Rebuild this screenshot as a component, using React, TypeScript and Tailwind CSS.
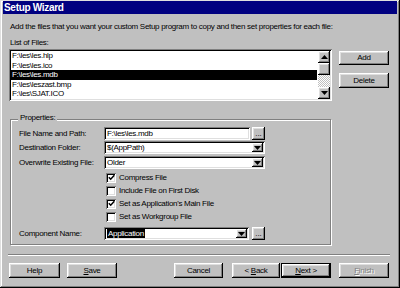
import React from "react";

const sunken =
  "bg-white shadow-[inset_1px_1px_0_#808080,inset_-1px_-1px_0_#ffffff,inset_2px_2px_0_#000000,inset_-2px_-2px_0_#dfdfdf]";
const raised =
  "bg-[#c0c0c0] shadow-[inset_-1px_-1px_0_#000000,inset_1px_1px_0_#ffffff,inset_-2px_-2px_0_#808080,inset_2px_2px_0_#dfdfdf]";

function Down() {
  return (
    <svg width="7" height="4" viewBox="0 0 7 4">
      <polygon points="0,0 7,0 3.5,4" fill="#000" />
    </svg>
  );
}
function Up() {
  return (
    <svg width="7" height="4" viewBox="0 0 7 4">
      <polygon points="0,4 7,4 3.5,0" fill="#000" />
    </svg>
  );
}

function Check({ on, label }: { on: boolean; label: string }) {
  return (
    <div className="flex items-center h-[13px] ml-[87px]">
      <div className={`w-[10px] h-[10px] flex items-center justify-center ${sunken}`}>
        {on && (
          <svg width="7" height="7" viewBox="0 0 7 7">
            <path d="M0.8 3.2 L2.7 5.2 L6.3 1.2" stroke="#000" strokeWidth="1.5" fill="none" />
          </svg>
        )}
      </div>
      <span className="ml-[3px] leading-[11px]">{label}</span>
    </div>
  );
}

function Combo({ w, children }: { w: string; children: React.ReactNode }) {
  return (
    <div className={`${w} h-[13px] flex p-[2px] ${sunken}`}>
      <div className="flex-1 flex items-center pl-[1px] leading-[9px] overflow-hidden whitespace-nowrap">{children}</div>
      <div className={`w-[11px] h-full flex items-center justify-center ${raised}`}>
        <Down />
      </div>
    </div>
  );
}

function Dots({ ml }: { ml: string }) {
  return (
    <div className={`${ml} w-[13px] h-[13px] flex items-end justify-center pb-[3px] ${raised}`}>
      <span className="leading-[6px] tracking-[0px]">...</span>
    </div>
  );
}

const items = [
  "F:\\les\\les.hlp",
  "F:\\les\\les.ico",
  "F:\\les\\les.mdb",
  "F:\\les\\leszast.bmp",
  "F:\\les\\SJAT.ICO",
];

export default function App() {
  return (
    <div className="w-[400px] h-[288px] bg-[#c0c0c0] font-['Liberation_Sans',Arial,sans-serif] text-[8px] tracking-[-0.3px] text-black flex flex-col pt-[1px] px-[3px] overflow-hidden shadow-[inset_-1px_-1px_0_#000000,inset_1px_1px_0_#dfdfdf,inset_-2px_-2px_0_#808080,inset_2px_2px_0_#ffffff]">
      <div className="h-[13px] shrink-0 bg-[#000080] text-white font-bold text-[10px] leading-[13px] pl-[1px]">
        Setup Wizard
      </div>
      <div className="pl-[6px] flex flex-col">
        <div className="mt-[7px] h-[11px] leading-[11px] pl-[1px] whitespace-nowrap">
          Add the files that you want your custom Setup program to copy and then set properties for each file:
        </div>
        <div className="mt-[5px] h-[11px] leading-[11px] pl-[1px]">List of Files:</div>
        <div className="mt-[1px] flex">
          <div className={`w-[323px] h-[52px] p-[2px] flex ${sunken}`}>
            <div className="flex-1 flex flex-col overflow-hidden">
              {items.map((t, i) => (
                <div
                  key={t}
                  className={`h-[9.5px] leading-[9.5px] pl-[1px] mr-[1px] whitespace-nowrap ${
                    i === 2 ? "bg-black text-white" : ""
                  }`}
                >
                  {t}
                </div>
              ))}
            </div>
            <div className="w-[12px] flex flex-col">
              <div className={`h-[12px] flex items-center justify-center ${raised}`}>
                <Up />
              </div>
              <div className={`h-[12px] ${raised}`} />
              <div className="flex-1 bg-[repeating-conic-gradient(#c0c0c0_0%_25%,#ffffff_0%_50%)] bg-[length:2px_2px]" />
              <div className={`h-[12px] flex items-center justify-center ${raised}`}>
                <Down />
              </div>
            </div>
          </div>
          <div className="ml-[7px] w-[50px] flex flex-col">
            <div className={`mt-[2px] h-[14px] flex items-center justify-center ${raised}`}>Add</div>
            <div className={`mt-[8px] h-[15px] flex items-center justify-center ${raised}`}>Delete</div>
          </div>
        </div>

        <div className="mt-[18px] ml-[1px] w-[321px] h-[126px] relative border border-[#808080] shadow-[inset_1px_1px_0_#ffffff,1px_1px_0_#ffffff]">
          <div className="absolute left-[7px] top-[-8px] px-[2px] bg-[#c0c0c0] leading-[11px]">Properties:</div>
          <div className="pl-[8px] pt-[7px] flex flex-col">
            <div className="flex items-center h-[13px]">
              <div className="w-[85px] leading-[11px] whitespace-nowrap">File Name and Path:</div>
              <div className={`w-[146px] h-[13px] flex items-center pl-[3px] leading-[9px] ${sunken}`}>F:\les\les.mdb</div>
              <Dots ml="ml-[2px]" />
            </div>
            <div className="mt-[1px] flex items-center h-[13px]">
              <div className="w-[85px] leading-[11px] whitespace-nowrap">Destination Folder:</div>
              <Combo w="w-[161px]">$(AppPath)</Combo>
            </div>
            <div className="mt-[2px] flex items-center h-[13px]">
              <div className="w-[85px] leading-[11px] whitespace-nowrap">Overwrite Existing File:</div>
              <Combo w="w-[161px]">Older</Combo>
            </div>
            <div className="mt-[2px] flex flex-col">
              <Check on={true} label="Compress File" />
              <Check on={false} label="Include File on First Disk" />
              <Check on={true} label="Set as Application's Main File" />
              <Check on={false} label="Set as Workgroup File" />
            </div>
            <div className="mt-[4px] flex items-center h-[13px]">
              <div className="w-[85px] leading-[11px] whitespace-nowrap">Component Name:</div>
              <Combo w="w-[145px]">
                <span className="bg-black text-white px-[1px] leading-[9px]">Application</span>
              </Combo>
              <Dots ml="ml-[3px]" />
            </div>
          </div>
        </div>

        <div className="mt-[9px] -ml-[1px] w-[382px] h-[2px] border-t border-t-[#808080] border-b border-b-white" />

        <div className="mt-[7px] flex h-[15px]">
          <div className={`w-[51px] h-full flex items-center justify-center ${raised}`}>Help</div>
          <div className={`ml-[7px] w-[50px] h-full flex items-center justify-center ${raised}`}>
            <span><span className="underline">S</span>ave</span>
          </div>
          <div className={`ml-[57px] w-[49px] h-full flex items-center justify-center ${raised}`}>Cancel</div>
          <div className={`ml-[9px] w-[48px] h-full flex items-center justify-center ${raised}`}>
            <span>&lt; <span className="underline">B</span>ack</span>
          </div>
          <div className="ml-[1px] w-[50px] h-full border border-black">
            <div className={`w-full h-full flex items-center justify-center ${raised}`}>
              <span><span className="underline">N</span>ext &gt;</span>
            </div>
          </div>
          <div className={`ml-[8px] w-[50px] h-full flex items-center justify-center text-[#808080] [text-shadow:1px_1px_0_#ffffff] ${raised}`}>
            <span><span className="underline">F</span>inish</span>
          </div>
        </div>
      </div>
    </div>
  );
}
